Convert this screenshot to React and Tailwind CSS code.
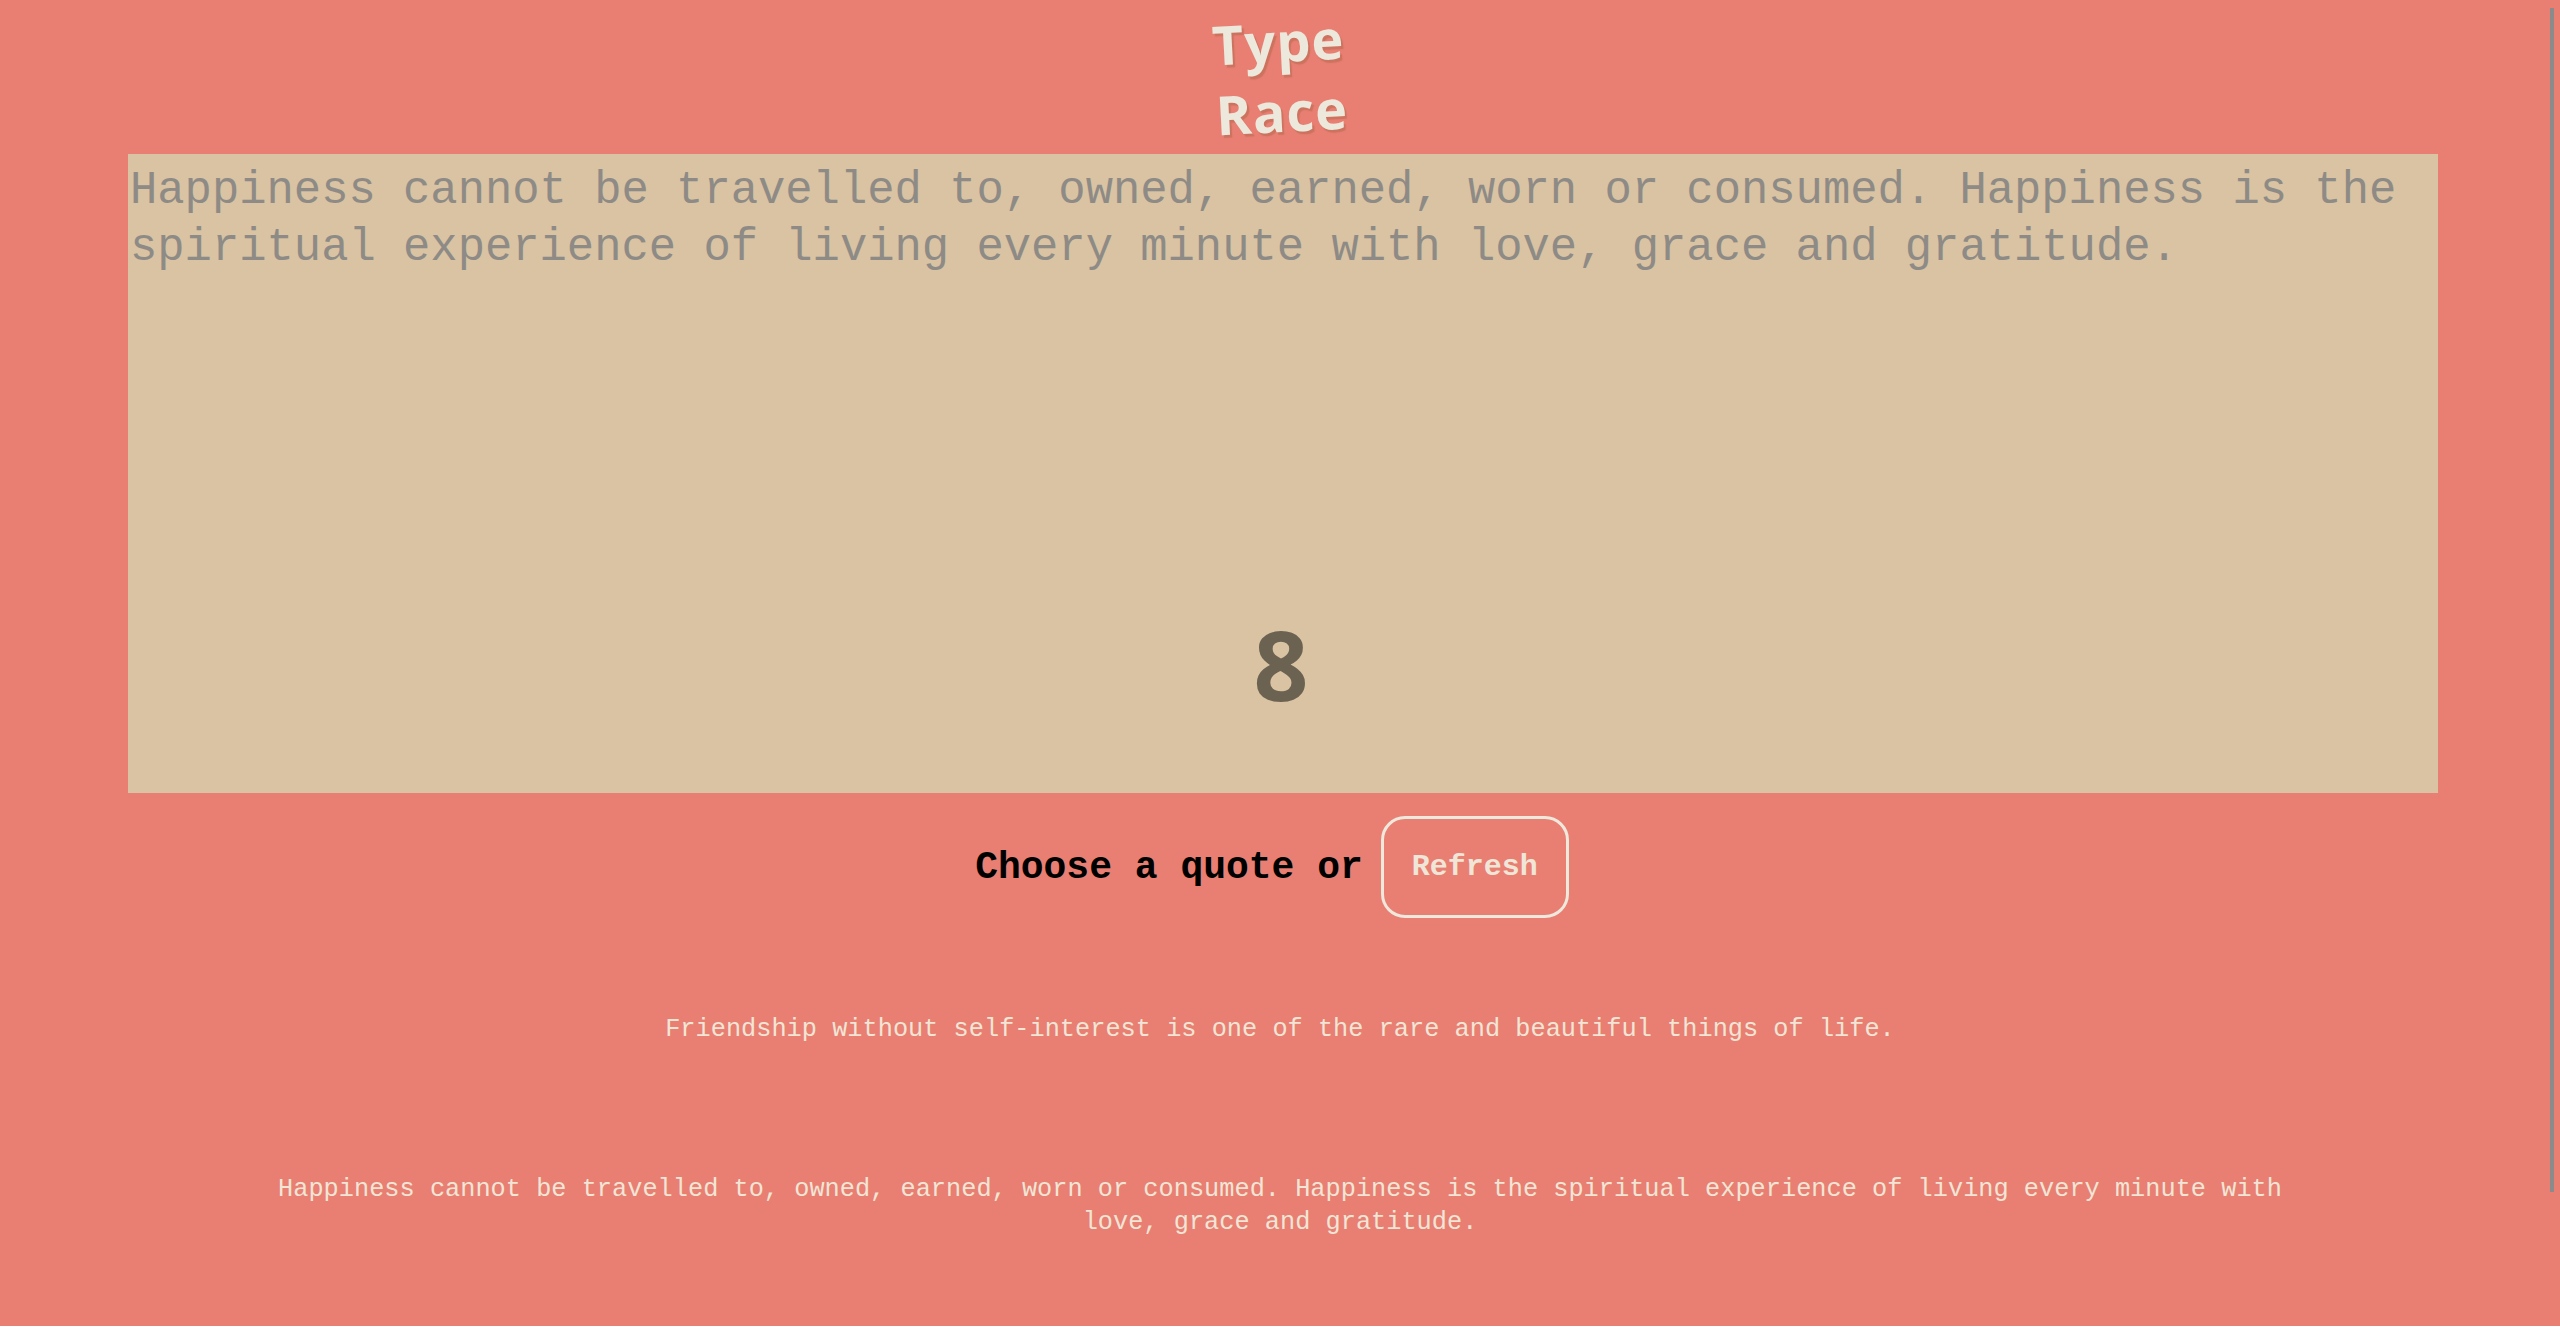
import React from "react";

// цитаты для выбора
const quotes = [
  "Friendship without self-interest is one of the rare and beautiful things of life.",
  "Happiness cannot be travelled to, owned, earned, worn or consumed. Happiness is the spiritual experience of living every minute with love, grace and gratitude.",
];

const current = quotes[1];

const App = () => {
  return (
    <div className="relative flex h-[1326px] flex-col overflow-hidden bg-[#e87f72]">
      <h1 className="mx-auto mt-[6px] w-[160px] -rotate-3 text-center font-['Open_Sans',sans-serif] text-[54px] font-bold leading-[70px] tracking-[1px] text-[#ede8dc] [text-shadow:2px_3px_1px_rgba(170,100,70,0.45)]">
        Type Race
      </h1>

      <div className="ml-[128px] mt-[8px] flex h-[639px] w-[2310px] flex-col bg-[#d9c3a3] pl-[2px] pt-[9px]">
        <p className="font-['Liberation_Mono',monospace] text-[45.5px] leading-[57px] text-[#8e8b86]">
          {current}
        </p>
        <div className="mb-[57px] mt-auto pr-[6px] text-center font-['Open_Sans',sans-serif] text-[96px] font-bold leading-normal text-[#6b6252]">
          8
        </div>
      </div>

      <div className="mt-[23px] flex items-center justify-center pr-[16px]">
        <span className="font-['Liberation_Mono',monospace] text-[38px] font-bold text-black">
          Choose a quote or
        </span>
        <button className="ml-[18px] h-[102px] w-[188px] rounded-[24px] border-[3px] border-[#efe8dc] font-['Liberation_Mono',monospace] text-[30px] font-bold text-[#efe6d8]">
          Refresh
        </button>
      </div>

      <ul className="mx-auto mt-[95px] flex w-[2048px] flex-col gap-[127px]">
        {quotes.map((q) => (
          <li
            key={q}
            className="cursor-pointer text-center font-['Liberation_Mono',monospace] text-[25.3px] leading-[33px] text-[#f1e5d5]"
          >
            {q}
          </li>
        ))}
      </ul>

      <div className="absolute right-[6px] top-[8px] h-[1184px] w-[4px] bg-[#8b8b8b]" />
    </div>
  );
};

export default App;
